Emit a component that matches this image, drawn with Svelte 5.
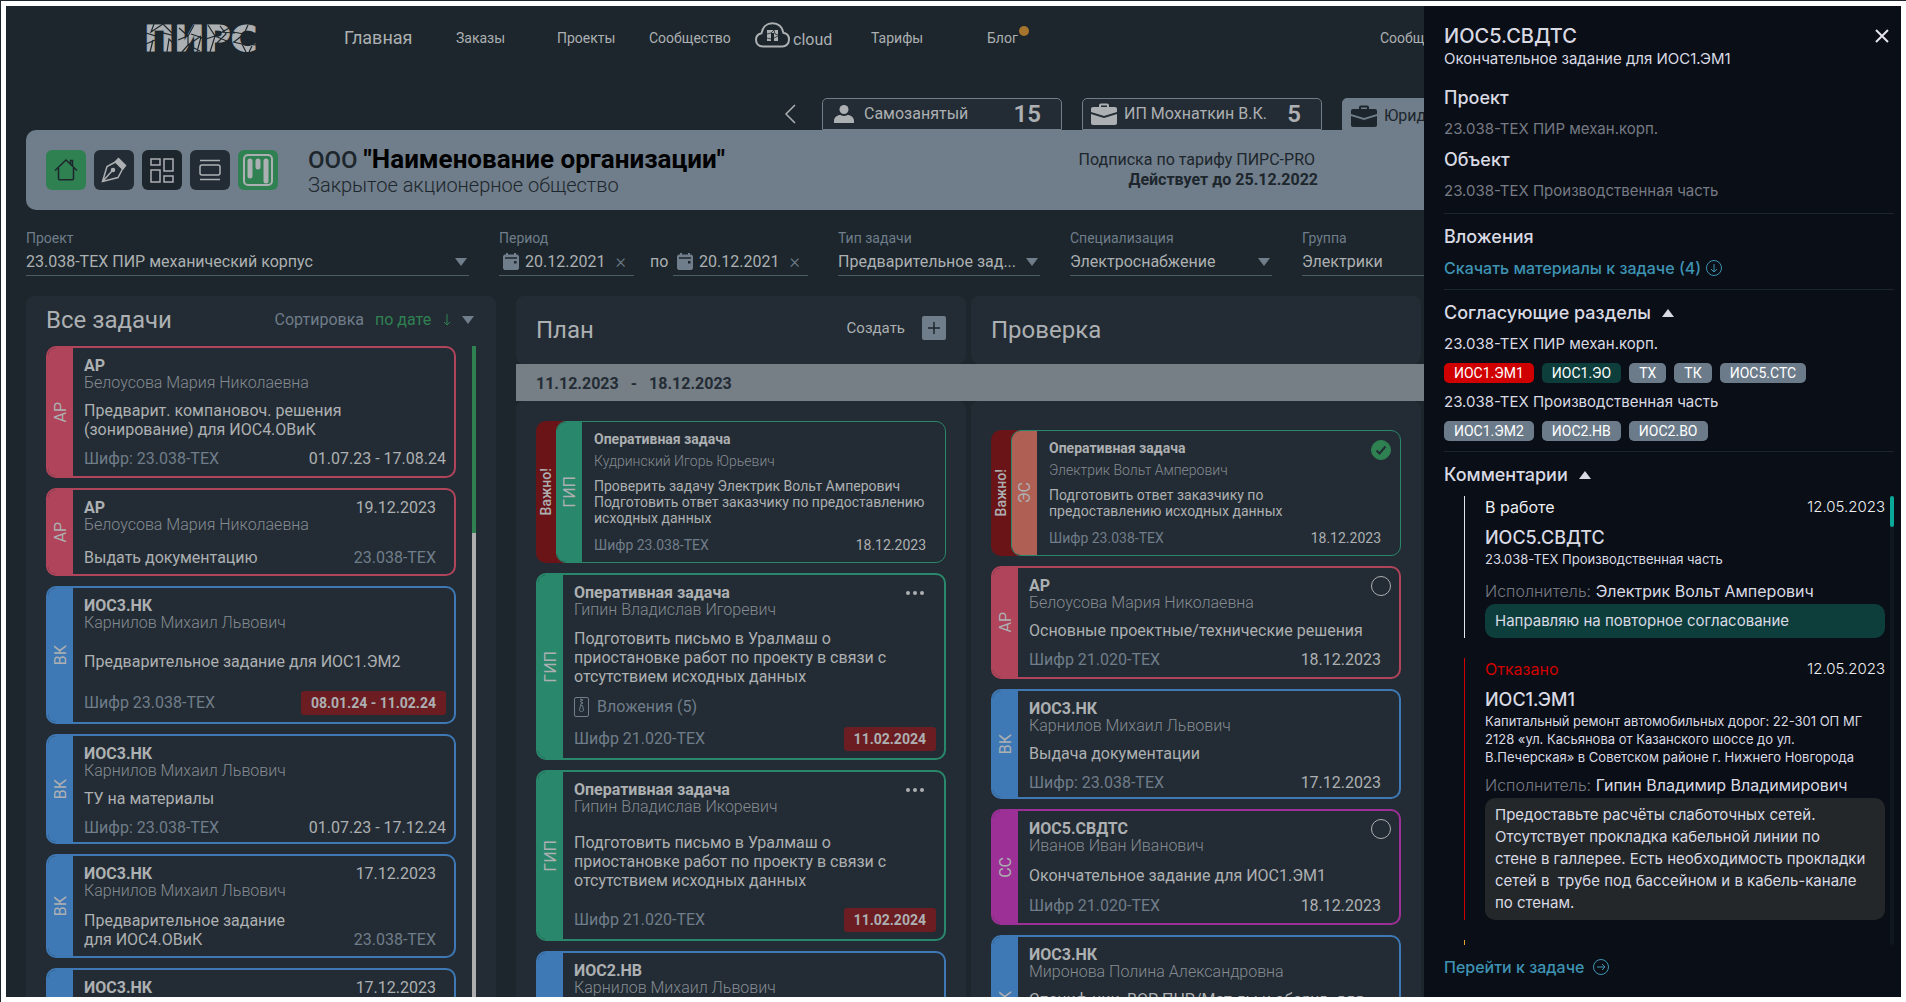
<script lang="ts">
  type Tone = 'pink' | 'blue' | 'green' | 'magenta' | 'salmon';

  interface Card {
    id: string;
    tone: Tone;
    mark: string;          // short section code on the coloured spine
    title: string;
    person: string;
    text: string;
    code?: string;
    date?: string;
    headDate?: string;     // date shown in the title row
    late?: string;         // overdue date, red badge
    files?: number;
    urgent?: boolean;
    menu?: boolean;
    check?: boolean;       // undefined means no tick circle
    height: number;
  }

  const nav = ['Заказы', 'Проекты', 'Сообщество'];

  const allTasks: Card[] = [
    { id: 'a1', tone: 'pink', mark: 'АР', title: 'АР', person: 'Белоусова Мария Николаевна', text: 'Предварит. компановоч. решения\n(зонирование) для ИОС4.ОВиК', code: 'Шифр: 23.038-ТЕХ', date: '01.07.23 - 17.08.24', height: 132 },
    { id: 'a2', tone: 'pink', mark: 'АР', title: 'АР', person: 'Белоусова Мария Николаевна', text: 'Выдать документацию', code: '23.038-ТЕХ', headDate: '19.12.2023', height: 88 },
    { id: 'a3', tone: 'blue', mark: 'ВК', title: 'ИОС3.НК', person: 'Карнилов Михаил Львович', text: 'Предварительное задание для ИОС1.ЭМ2', code: 'Шифр 23.038-ТЕХ', late: '08.01.24 - 11.02.24', height: 138 },
    { id: 'a4', tone: 'blue', mark: 'ВК', title: 'ИОС3.НК', person: 'Карнилов Михаил Львович', text: 'ТУ на материалы', code: 'Шифр: 23.038-ТЕХ', date: '01.07.23 - 17.12.24', height: 110 },
    { id: 'a5', tone: 'blue', mark: 'ВК', title: 'ИОС3.НК', person: 'Карнилов Михаил Львович', text: 'Предварительное задание\nдля ИОС4.ОВиК', code: '23.038-ТЕХ', headDate: '17.12.2023', height: 104 },
    { id: 'a6', tone: 'blue', mark: '', title: 'ИОС3.НК', person: '', text: '', headDate: '17.12.2023', height: 104 },
  ];

  const planTasks: Card[] = [
    { id: 'p1', tone: 'green', mark: 'ГИП', title: 'Оперативная задача', person: 'Кудринский Игорь Юрьевич', text: 'Проверить задачу Электрик Вольт Амперович\nПодготовить ответ заказчику по предоставлению\nисходных данных', code: 'Шифр 23.038-ТЕХ', date: '18.12.2023', urgent: true, height: 142 },
    { id: 'p2', tone: 'green', mark: 'ГИП', title: 'Оперативная задача', person: 'Гипин Владислав Игоревич', text: 'Подготовить письмо в Уралмаш о\nприостановке работ по проекту в связи с\nотсутствием исходных данных', code: 'Шифр 21.020-ТЕХ', late: '11.02.2024', files: 5, menu: true, height: 187 },
    { id: 'p3', tone: 'green', mark: 'ГИП', title: 'Оперативная задача', person: 'Гипин Владислав Икоревич', text: 'Подготовить письмо в Уралмаш о\nприостановке работ по проекту в связи с\nотсутствием исходных данных', code: 'Шифр 21.020-ТЕХ', late: '11.02.2024', menu: true, height: 171 },
    { id: 'p4', tone: 'blue', mark: '', title: 'ИОС2.НВ', person: 'Карнилов Михаил Львович', text: '', height: 110 },
  ];

  const reviewTasks: Card[] = [
    { id: 'r1', tone: 'salmon', mark: 'ЭС', title: 'Оперативная задача', person: 'Электрик Вольт Амперович', text: 'Подготовить ответ заказчику по\nпредоставлению исходных данных', code: 'Шифр 23.038-ТЕХ', date: '18.12.2023', urgent: true, check: true, height: 126 },
    { id: 'r2', tone: 'pink', mark: 'АР', title: 'АР', person: 'Белоусова Мария Николаевна', text: 'Основные проектные/технические решения', code: 'Шифр 21.020-ТЕХ', date: '18.12.2023', check: false, height: 113 },
    { id: 'r3', tone: 'blue', mark: 'ВК', title: 'ИОС3.НК', person: 'Карнилов Михаил Львович', text: 'Выдача документации', code: 'Шифр: 23.038-ТЕХ', date: '17.12.2023', height: 110 },
    { id: 'r4', tone: 'magenta', mark: 'СС', title: 'ИОС5.СВДТС', person: 'Иванов Иван Иванович', text: 'Окончательное задание для ИОС1.ЭМ1', code: 'Шифр 21.020-ТЕХ', date: '18.12.2023', check: false, height: 116 },
    { id: 'r5', tone: 'blue', mark: 'ВК', title: 'ИОС3.НК', person: 'Миронова Полина Александровна', text: 'Специф-ции, ВОР ПНР/Мат-лы и оборуд. для', height: 132 },
  ];

  const sections = [
    { name: '23.038-ТЕХ ПИР механ.корп.', chips: [['ИОС1.ЭМ1', 'refused'], ['ИОС1.ЭО', 'agreed'], ['ТХ', ''], ['ТК', ''], ['ИОС5.СТС', '']] },
    { name: '23.038-ТЕХ Производственная часть', chips: [['ИОС1.ЭМ2', ''], ['ИОС2.НВ', ''], ['ИОС2.ВО', '']] },
  ];

  const comments = [
    { status: 'В работе', kind: 'work', date: '12.05.2023', title: 'ИОС5.СВДТС', object: '23.038-ТЕХ Производственная часть', author: 'Электрик Вольт Амперович', text: 'Направляю на повторное согласование' },
    { status: 'Отказано', kind: 'refused', date: '12.05.2023', title: 'ИОС1.ЭМ1', object: 'Капитальный ремонт автомобильных дорог: 22-301 ОП МГ\n2128 «ул. Касьянова от Казанского шоссе до ул.\nВ.Печерская» в Советском районе г. Нижнего Новгорода', author: 'Гипин Владимир Владимирович', text: 'Предоставьте расчёты слаботочных сетей.\nОтсутствует прокладка кабельной линии по\nстене в галлерее. Есть необходимость прокладки\nсетей в  трубе под бассейном и в кабель-канале\nпо стенам.' },
  ];

  let showSections = $state(true);
  let showComments = $state(true);
  let open = $state(true);
</script>

{#snippet briefcase()}
  <svg class="case" viewBox="0 0 26 22" width="26" height="22" aria-hidden="true">
    <path d="M8 4V2.5C8 1.2 8.8.5 10 .5h6c1.200 0 2 .7 2 2V4h6c1.200 0 2 .7 2 2v3l-13 4L0 9V6c0-1.300.8-2 2-2zm2 0h6V2.500h-6z" fill="currentColor" />
    <path d="M0 11l13 4 13-4v9c0 1.200-.8 2-2 2H2c-1.200 0-2-.8-2-2z" fill="currentColor" />
  </svg>
{/snippet}

{#snippet calendar()}
  <svg viewBox="0 0 16 17" width="16" height="17" aria-hidden="true">
    <path d="M3 0h2v1.500h6V0h2v1.500h1.500L16 3v12.500L14.500 17h-13L0 15.500V3l1.500-1.500H3z" fill="#707d8a" />
    <path d="M2 5h12" stroke="#1c262c" stroke-width="1.500" />
    <path d="M11 8h2.500v2.500H11z" fill="#1c262c" />
  </svg>
{/snippet}

{#snippet card(c: Card)}
  <article class="card {c.tone}" class:urgent={c.urgent} class:low={c.height === 110} style:min-height="{c.height}px">
    {#if c.urgent}<span class="flag"><b>Важно!</b></span>{/if}
    <div class="card-main">
      <span class="spine"><i>{c.mark}</i></span>
      <div class="card-body">
        <header>
          <h3>{c.title}</h3>
          {#if c.headDate}<time>{c.headDate}</time>{/if}
          {#if c.menu}
            <button type="button" class="dots" aria-label="Действия"><svg viewBox="0 0 18 4" width="18" height="4"><circle cx="2" cy="2" r="2" /><circle cx="9" cy="2" r="2" /><circle cx="16" cy="2" r="2" /></svg></button>
          {/if}
        </header>
        {#if c.check !== undefined}
          <label class="tick">
            <input type="checkbox" checked={c.check} aria-label="Проверено" />
            <svg viewBox="0 0 20 20" width="20" height="20" aria-hidden="true"><path d="M5.500 10.500l3 3 6-7" /></svg>
          </label>
        {/if}
        <p class="person">{c.person}</p>
        {#if c.headDate}
          <div class="row last">
            <p class="text">{c.text}</p>
            <span class="code">{c.code}</span>
          </div>
        {:else}
          <p class="text grow" class:from-top={!c.code}>{c.text}</p>
          {#if c.files}
            <p class="files">
              <svg viewBox="0 0 15 20" width="15" height="20" aria-hidden="true"><rect x=".5" y=".5" width="14" height="19" rx="1.500" /><path d="M6 2l3 1-3 1.500 3 1.500-3 1.500M6.500 8.500h2l1 4.500c0 2-4 2-4 0z" /></svg>
              Вложения ({c.files})
            </p>
          {/if}
          {#if c.code}
            <div class="row foot">
              <span class="code">{c.code}</span>
              {#if c.late}<time class="late">{c.late}</time>{:else}<time class:range={(c.date ?? '').length > 10}>{c.date}</time>{/if}
            </div>
          {/if}
        {/if}
      </div>
    </div>
  </article>
{/snippet}

<div class="frame">
  <div class="app">
    <div class="workspace">
      <div class="page" class:wide={open}>
        <header class="top">
          <a href="#home" class="logo" aria-label="ПИРС">
            <svg viewBox="0 0 113 28" width="113" height="28">
              <text x="-2" y="27">ПИРС</text>
              <path class="crack" d="M0 9l10 3 7-3 12 3M8 0l-3 8 12-8 9 9M4 28l3-12M0 20l9-4M21 28l2-13 6 6M33 4l9 8 6-11M32 16l10-4v9l13-9M36 28l6-7 12 6M45 10l12 4M51 28l4-15M62 1l7 11 16-9M60 15l9-3M64 28l5-16 14 6M72 8l17 1M74 2l6 8-9 9M102 1l-4 9 16-1M87 8l11 2-10 8M87 18l9 2 4 8M97 20l16 1M106 22l-3 6" />
            </svg>
          </a>
          <nav>
            <a href="#main" class="current">Главная</a>
            {#each nav as item}<a href="#{item}">{item}</a>{/each}
            <a href="#cloud" class="cloud">
              <svg viewBox="0 0 35 26" width="35" height="26" aria-hidden="true">
                <path d="M8 24.500C3.500 24.500 1 21.500 1 17.800c0-3.300 2.200-5.800 5.500-6.500C7.500 5 11.800 1.200 17.500 1.200S27.600 5 28.400 10.800c3.300.6 5.600 3.200 5.600 6.700 0 3.900-2.700 7-6.800 7z" fill="none" stroke="#adb0b2" stroke-width="2" />
                <path d="M12 8h11v11h-4v-8h-3v8h-4z" fill="#adb0b2" />
                <path d="M12 12l4-1 3-3 1 4 3 1M12 16l4 1M19 16l4-2" stroke="#1c262c" stroke-width=".8" fill="none" />
              </svg>
              cloud
            </a>
            <a href="#tariffs">Тарифы</a>
            <a href="#blog" class="blog">Блог<i class="dot"></i></a>
            <a href="#messages">Сообщения</a>
          </nav>
        </header>

        <div class="accounts">
          <button type="button" class="prev" aria-label="Назад"><svg viewBox="0 0 12 20" width="12" height="20"><path d="M11 1L2 10l9 9" /></svg></button>
          <button type="button" class="account">
            <svg viewBox="0 0 20 18" width="20" height="18" aria-hidden="true"><circle cx="10" cy="4.500" r="4.500" fill="currentColor" /><path d="M0 18v-2c0-3.500 3-6 6.500-6 2 1.300 5 1.300 7 0 3.500 0 6.500 2.500 6.500 6v2z" fill="currentColor" /></svg>
            <span>Самозанятый</span><b>15</b>
          </button>
          <button type="button" class="account case-tab">{@render briefcase()}<span>ИП Мохнаткин В.К.</span><b>5</b></button>
          <button type="button" class="account case-tab active">{@render briefcase()}<span>Юридическое лицо</span></button>
        </div>

        <section class="banner">
          <div class="tools">
            <button type="button" class="on" aria-label="Главная"><svg viewBox="0 0 24 24" width="24" height="24"><path d="M1 12.500L12 2l11 10.500M4.500 10v10.500c0 .8.4 1.200 1.200 1.200h12.600c.8 0 1.200-.4 1.200-1.200V10M16.500 6V2.500h2v5.500" stroke="#1c262c" /></svg></button>
            <button type="button" aria-label="Задание"><svg viewBox="0 0 26 26" width="26" height="26"><path d="M1.500 24.500L6 9.500 14.500 5l7 7-4.500 8.500zM2 24l9-10" /><circle cx="12" cy="13" r="1.500" fill="#adb0b2" /><path d="M17.500.5l8 8-3.500 4.500-8.500-8.500z" fill="#adb0b2" stroke="none" /></svg></button>
            <button type="button" class="deep" aria-label="Плитка"><svg viewBox="0 0 24 25" width="24" height="25"><path d="M1 1h9v6H1zM14 1h9v12h-9zM1 12h9v12H1zM14 18h9v6h-9z" /></svg></button>
            <button type="button" aria-label="Лента"><svg viewBox="0 0 22 22" width="22" height="22"><path d="M1 1.500h20M1 20.500h20" /><rect x="1" y="6" width="20" height="10" rx="2" /></svg></button>
            <button type="button" class="on" aria-label="Доска"><svg viewBox="0 0 32 34" width="32" height="34"><rect x="2" y="2" width="28" height="30" rx="4" stroke-width="2" /><path d="M8 8v15M16 8v6M24 8v20" stroke-width="5" stroke-linecap="round" class="bars" /></svg></button>
          </div>
          <div class="org">
            <h1>ООО <b>"Наименование организации"</b></h1>
            <p>Закрытое акционерное общество</p>
          </div>
          <div class="plan">
            <p>Подписка по тарифу ПИРС-PRO</p>
            <b>Действует до 25.12.2022</b>
          </div>
        </section>

        <form class="filters">
          <label>Проект <span class="pick"><select><option>23.038-ТЕХ ПИР механический корпус</option></select></span></label>
          <fieldset>
            <legend>Период</legend>
            <div class="period">
              <span class="date">{@render calendar()}<input type="text" value="20.12.2021" aria-label="Начало периода" /><button type="button" aria-label="Очистить">×</button></span>
              <span class="to">по</span>
              <span class="date">{@render calendar()}<input type="text" value="20.12.2021" aria-label="Конец периода" /><button type="button" aria-label="Очистить">×</button></span>
            </div>
          </fieldset>
          <label>Тип задачи <span class="pick"><select><option>Предварительное зад...</option></select></span></label>
          <label>Специализация <span class="pick"><select><option>Электроснабжение</option></select></span></label>
          <label>Группа <span class="pick"><select><option>Электрики</option></select></span></label>
        </form>

        <main class="board">
          <section class="backlog">
            <header>
              <h2>Все задачи</h2>
              <label class="sort">Сортировка <select><option>по дате</option></select>
                <svg viewBox="0 0 8 12" width="8" height="12" aria-hidden="true"><path d="M4 0v11M1 8l3 3 3-3" fill="none" stroke="#2f8152" /></svg>
                <i class="tri"></i>
              </label>
            </header>
            <div class="backlog-body">
              <div class="stack">{#each allTasks as c (c.id)}{@render card(c)}{/each}</div>
              <div class="track"><i></i></div>
            </div>
          </section>

          <div class="stages">
            <header class="stage-head">
              <h2>План</h2>
              <button type="button" class="create">Создать <svg viewBox="0 0 24 24" width="24" height="24"><rect width="24" height="24" rx="2" fill="#707d8a" /><path d="M6 12h12M12 6v12" stroke="#1c262c" stroke-width="1.500" /></svg></button>
            </header>
            <header class="stage-head"><h2>Проверка</h2></header>
            <div class="stage-head"></div>
            <div class="week"><span>11.12.2023</span><span>-</span><span>18.12.2023</span></div>
            <div class="stack stage">{#each planTasks as c (c.id)}{@render card(c)}{/each}</div>
            <div class="stack stage review">{#each reviewTasks as c (c.id)}{@render card(c)}{/each}</div>
            <div class="stage"></div>
          </div>
        </main>
      </div>
    </div>

    {#if open}
      <aside class="drawer">
        <header>
          <h2>ИОС5.СВДТС</h2>
          <button type="button" class="close" aria-label="Закрыть" onclick={() => (open = false)}><svg viewBox="0 0 14 14" width="14" height="14"><path d="M1 1l12 12M13 1L1 13" /></svg></button>
        </header>
        <p>Окончательное задание для ИОС1.ЭМ1</p>
        <div class="block about">
          <h3>Проект</h3>
          <p class="dim">23.038-ТЕХ ПИР механ.корп.</p>
          <h3>Объект</h3>
          <p class="dim">23.038-ТЕХ Производственная часть</p>
        </div>
        <div class="block">
          <h3>Вложения</h3>
          <a class="link" href="#files">Скачать материалы к задаче (4)
            <svg viewBox="0 0 16 16" width="16" height="16" aria-hidden="true"><circle cx="8" cy="8" r="7.500" /><path d="M8 4v8M5 9l3 3 3-3" /></svg>
          </a>
        </div>
        <div class="block agreeing">
          <h3><button type="button" onclick={() => (showSections = !showSections)} aria-expanded={showSections}>Согласующие разделы <i class="tri up"></i></button></h3>
          {#if showSections}
            {#each sections as s}
              <p>{s.name}</p>
              <ul class="chips">{#each s.chips as [name, kind]}<li class={kind}>{name}</li>{/each}</ul>
            {/each}
          {/if}
        </div>
        <div class="block talk">
          <h3><button type="button" onclick={() => (showComments = !showComments)} aria-expanded={showComments}>Комментарии <i class="tri up"></i></button></h3>
          {#if showComments}
            <div class="feed">
              <div class="feed-list">
                {#each comments as m}
                  <article class="comment {m.kind}">
                    <div class="meta"><span class="status">{m.status}</span><time>{m.date}</time></div>
                    <h4>{m.title}</h4>
                    <p class="object">{m.object}</p>
                    <p class="author"><span>Исполнитель:</span> {m.author}</p>
                    <p class="bubble">{m.text}</p>
                  </article>
                {/each}
                <article class="comment waiting"></article>
              </div>
              <div class="feed-track"><i></i></div>
            </div>
          {/if}
        </div>
        <a class="link goto" href="#task">Перейти к задаче
          <svg viewBox="0 0 16 16" width="16" height="16" aria-hidden="true"><circle cx="8" cy="8" r="7.500" /><path d="M4 8h8M9 5l3 3-3 3" /></svg>
        </a>
      </aside>
    {/if}
  </div>
</div>

<style>
  :global(body) {
    background: #fff;
  }

  .frame {
    box-sizing: border-box;
    height: 100vh;
    padding: 5px;
    border-top: 1px solid #1c262c;
    border-left: 1px solid #1c262c;
    --text: #adb0b2;
    --slate: #707d8a;
    --page: #1c262c;
    --panel: #232c34;
    --green: #2f8152;
    --drawer: 477px;
  }

  .frame * {
    box-sizing: border-box;
  }

  .app {
    display: flex;
    height: 100%;
    overflow: hidden;
    background: var(--page);
    color: var(--text);
    font: 400 16px/20px Roboto, sans-serif;
  }

  .workspace {
    flex: 1;
    min-width: 0;
    overflow: hidden;
  }

  .page {
    display: flex;
    flex-direction: column;
    height: 100%;
  }

  /* the page keeps its full width, the drawer takes its right part */
  .wide {
    width: calc(100% + var(--drawer));
  }

  h1, h2, h3, h4, p, ul, fieldset {
    margin: 0;
    padding: 0;
    border: 0;
    font-weight: 400;
  }

  a {
    color: inherit;
    text-decoration: none;
  }

  button, input, select {
    margin: 0;
    padding: 0;
    border: 0;
    background: none;
    color: inherit;
    font: inherit;
    cursor: pointer;
  }

  select {
    appearance: none;
  }

  i {
    font-style: normal;
  }

  svg {
    display: block;
    flex: none;
  }

  .tri {
    border: 6px solid transparent;
    border-top: 8px solid var(--slate);
    border-bottom: 0;
  }

  .tri.up {
    border-top: 0;
    border-bottom: 8px solid #d9dae4;
  }

  /* top bar */
  .top {
    display: flex;
    flex: none;
    align-items: center;
    height: 64px;
    padding-left: 140px;
  }

  .logo {
    width: 198px;
  }

  .logo svg {
    overflow: visible;
  }

  .logo text {
    fill: var(--text);
    stroke: var(--text);
    font: 700 36px "DejaVu Sans", sans-serif;
  }

  .crack {
    fill: none;
    stroke: var(--page);
    stroke-width: 1.2;
  }

  nav {
    display: grid;
    grid-template-columns: 112px 101px 92px 106px 116px 116px 393px auto;
    align-items: center;
    font-size: 14px;
  }

  .current {
    font-size: 18px;
  }

  .cloud {
    display: flex;
    gap: 3px;
    align-items: flex-end;
    padding-bottom: 7px;
    font-size: 16px;
    line-height: 16px;
  }

  .blog {
    display: flex;
    gap: 1px;
  }

  .dot {
    width: 10px;
    height: 10px;
    margin-top: -2px;
    border-radius: 50%;
    background: #a5752e;
  }

  .accounts {
    display: flex;
    flex: none;
    gap: 20px;
    height: 32px;
    margin-top: 28px;
    padding-left: 778px;
  }

  .prev {
    width: 18px;
  }

  .prev path {
    fill: none;
    stroke: var(--text);
    stroke-width: 1.5;
  }

  .account {
    display: flex;
    gap: 10px;
    align-items: center;
    width: 240px;
    padding: 0 20px 0 11px;
    border: 1px solid var(--slate);
    border-radius: 5px 5px 0 0;
    background: var(--panel);
    text-align: left;
  }

  .account b {
    margin-left: auto;
    font-size: 24px;
    font-weight: 600;
  }

  .case-tab {
    gap: 7px;
    padding-left: 8px;
  }

  .active {
    padding-top: 4px;
    background: var(--slate);
    color: var(--page);
  }

  .banner {
    display: flex;
    flex: none;
    align-items: center;
    height: 80px;
    margin-left: 20px;
    padding-left: 20px;
    border-radius: 10px 0 0 10px;
    background: var(--slate);
    color: var(--page);
  }

  .tools {
    display: flex;
    gap: 8px;
  }

  .tools button {
    display: grid;
    place-items: center;
    width: 40px;
    height: 40px;
    border-radius: 6px;
    background: var(--panel);
  }

  .tools .on {
    background: var(--green);
  }

  .tools .deep {
    background: var(--page);
  }

  .tools svg {
    fill: none;
    stroke: var(--text);
    stroke-width: 1.5;
  }

  .org {
    margin-left: 30px;
  }

  .org h1 {
    font-size: 24px;
    font-weight: 500;
    line-height: 28px;
  }

  .org b {
    color: #000;
    font-size: 26px;
    font-weight: 700;
  }

  .org p {
    font-size: 20px;
    font-weight: 300;
    line-height: 22px;
  }

  .plan {
    margin-right: 583px;
    margin-left: auto;
    text-align: right;
  }

  .plan p {
    padding-right: 3px;
  }

  /* filters */
  .filters {
    display: grid;
    flex: none;
    grid-template-columns: 443fr 309fr 202fr 202fr 202fr 367fr;
    gap: 30px;
    margin: 18px 0 20px 20px;
  }

  .filters label, .filters legend {
    padding: 0;
    color: var(--slate);
    font-size: 14px;
    line-height: 20px;
  }

  .filters fieldset {
    min-width: 0;
  }

  .pick, .date {
    display: flex;
    align-items: center;
    min-width: 0;
    height: 28px;
    border-bottom: 1px solid #4b5c66;
    color: var(--text);
    font-size: 16px;
  }

  .pick {
    padding-right: 2px;
  }

  .pick::after {
    border: 6px solid transparent;
    border-top: 8px solid var(--slate);
    border-bottom: 0;
    content: '';
  }

  .pick select {
    flex: 1;
    min-width: 0;
  }

  .period {
    display: grid;
    grid-template-columns: minmax(0, 135fr) 39px minmax(0, 135fr);
  }

  .date {
    gap: 6px;
    padding: 0 8px 0 4px;
  }

  .date input {
    flex: 1;
    min-width: 0;
  }

  .date button {
    padding-bottom: 2px;
    color: var(--slate);
    font-size: 20px;
    font-weight: 300;
  }

  .to {
    padding-left: 16px;
    line-height: 28px;
  }

  /* board */
  .board {
    display: grid;
    flex: 1;
    grid-template-rows: minmax(0, 1fr);
    grid-template-columns: 470fr 1385fr;
    gap: 20px;
    min-height: 0;
    margin-left: 20px;
    overflow: hidden;
  }

  .board h2 {
    font-size: 24px;
    line-height: 28px;
  }

  .backlog {
    display: flex;
    flex-direction: column;
    min-height: 0;
    padding: 0 20px;
    border-radius: 8px 8px 0 0;
    background: var(--panel);
  }

  .backlog > header {
    display: flex;
    flex: none;
    align-items: center;
    justify-content: space-between;
    height: 50px;
    padding-bottom: 2px;
  }

  .sort {
    display: flex;
    gap: 11px;
    align-items: center;
    color: var(--slate);
  }

  .sort select {
    color: var(--green);
  }

  .sort .tri {
    margin-right: 2px;
  }

  .backlog-body {
    display: flex;
    flex: 1;
    gap: 16px;
    min-height: 0;
  }

  .backlog-body .stack {
    flex: 1;
    overflow: hidden;
  }

  .track {
    width: 4px;
    background: #adadae;
  }

  .track i {
    display: block;
    height: 187px;
    background: var(--green);
  }

  .stack {
    display: flex;
    flex-direction: column;
    gap: 10px;
  }

  .stages {
    display: grid;
    grid-template-rows: 68px 37px minmax(0, 1fr);
    grid-template-columns: 450fr 450fr 475fr;
    column-gap: 5px;
    min-height: 0;
  }

  .stage-head {
    display: flex;
    align-items: center;
    justify-content: space-between;
    padding: 0 20px;
    border-radius: 8px;
    background: var(--panel);
  }

  .create {
    display: flex;
    gap: 17px;
    align-items: center;
    padding-bottom: 4px;
    font-size: 15px;
  }

  .week {
    display: flex;
    grid-column: 1 / -1;
    gap: 12px;
    align-items: center;
    padding: 2px 0 0 20px;
    background: #767e86;
    color: var(--panel);
    font-weight: 700;
  }

  .stage {
    min-height: 0;
    padding: 20px 20px 0;
    border-radius: 8px 8px 0 0;
    background: var(--panel);
  }

  .review {
    padding-top: 29px;
  }

  /* cards */
  .card {
    --tone: #b0445a;
    display: flex;
    flex: none;
    border-radius: 10px;
  }

  .blue { --tone: #3e78b5; }
  .green { --tone: #29876b; }
  .magenta { --tone: #9c3097; }
  .salmon { --tone: #b05f55; }

  .flag {
    display: grid;
    place-items: center;
    width: 20px;
  }

  .flag b {
    font-size: 14px;
    font-weight: 500;
    writing-mode: vertical-rl;
    transform: rotate(180deg);
  }

  .card-main {
    display: flex;
    flex: 1;
    min-width: 0;
    overflow: hidden;
    border: 2px solid var(--tone);
    border-radius: 10px;
    background: var(--panel);
  }

  .urgent {
    background: linear-gradient(90deg, #6b1417 40px, transparent 40px);
  }

  .urgent .card-main {
    border: 1px solid #29876b;
  }

  .spine {
    display: grid;
    flex: none;
    place-items: center;
    width: 25px;
    background: var(--tone);
  }

  .spine i {
    line-height: 20px;
    writing-mode: vertical-rl;
    transform: rotate(180deg);
  }

  .card-body {
    position: relative;
    display: flex;
    flex: 1;
    flex-direction: column;
    min-width: 0;
    padding: 9px 8px 7px 11px;
  }

  .low .card-body {
    padding-bottom: 4px;
  }

  .card-body header {
    display: flex;
    align-items: center;
    justify-content: space-between;
    height: 18px;
    padding-right: 10px;
  }

  .card h3 {
    font-size: 16px;
    font-weight: 700;
  }

  .person {
    min-height: 16px;
    color: #858b92;
    font-weight: 300;
    line-height: 16px;
  }

  .text {
    line-height: 19px;
    white-space: pre-line;
  }

  .grow {
    display: grid;
    flex: 1;
    align-content: center;
  }

  .from-top {
    align-content: start;
    padding-top: 10px;
  }

  .row {
    display: flex;
    align-items: center;
    justify-content: space-between;
    min-height: 20px;
    padding-right: 10px;
  }

  .last {
    align-items: flex-end;
    margin-top: auto;
    min-height: 19px;
  }

  .last .code {
    line-height: 19px;
  }

  .code {
    color: var(--slate);
  }

  .range, .late {
    margin-right: -10px;
  }

  .late {
    padding: 0 10px;
    border-radius: 3px;
    background: #6b1d22;
    font-size: 14px;
    font-weight: 700;
    line-height: 24px;
  }

  .dots {
    padding-right: 2px;
  }

  .dots svg {
    fill: var(--text);
  }

  .files {
    display: flex;
    gap: 8px;
    align-items: center;
    margin-bottom: 10px;
    color: var(--slate);
  }

  .files svg {
    fill: none;
    stroke: var(--slate);
  }

  .urgent .card-body {
    padding: 8px 9px 7px 12px;
    font-size: 14px;
  }

  .urgent h3 {
    font-size: 14px;
  }

  .urgent .person {
    margin-top: 5px;
  }

  .urgent .text {
    line-height: 16px;
  }

  .tick {
    position: absolute;
    top: 8px;
    right: 8px;
    display: grid;
  }

  .tick > * {
    grid-area: 1 / 1;
  }

  .tick input {
    width: 20px;
    height: 20px;
    border: 1px solid var(--text);
    border-radius: 50%;
    appearance: none;
  }

  .tick input:checked {
    border-color: var(--green);
    background: var(--green);
  }

  .tick path {
    fill: none;
    stroke: none;
    stroke-width: 2;
  }

  .tick input:checked + svg path {
    stroke: var(--panel);
  }

  .urgent .tick {
    top: 9px;
    right: 9px;
  }

  /* task drawer */
  .drawer {
    display: flex;
    flex: none;
    flex-direction: column;
    width: var(--drawer);
    padding: 17px 7px 19px 20px;
    background: #0a0e16;
    color: #d9dae4;
    font: 300 15px/20px Inter, sans-serif;
  }

  .drawer header {
    display: flex;
    align-items: center;
    justify-content: space-between;
    padding-right: 5px;
  }

  .drawer h2 {
    font-size: 20px;
    font-weight: 500;
    line-height: 26px;
  }

  .close path {
    fill: none;
    stroke: #e4e5ec;
    stroke-width: 2;
  }

  .block {
    display: flex;
    flex-direction: column;
    gap: 9px;
    padding: 11px 0;
    border-bottom: 1px solid #1b252c;
  }

  .about {
    padding: 17px 0 12px;
  }

  .agreeing {
    padding-bottom: 10px;
  }

  .drawer h3 {
    font-size: 18px;
    font-weight: 500;
    line-height: 24px;
  }

  .drawer h3 button {
    display: flex;
    gap: 11px;
    align-items: center;
  }

  .dim {
    color: #767a84;
  }

  .link {
    display: flex;
    gap: 5px;
    align-items: center;
    color: #3e93b3;
    font-size: 16px;
    font-weight: 500;
  }

  .link svg {
    fill: none;
    stroke: #3e93b3;
  }

  .chips {
    display: flex;
    gap: 8px;
    list-style: none;
  }

  .chips li {
    padding: 0 10px;
    border-radius: 5px;
    background: #6b7b8a;
    color: #fff;
    font: 400 14px/20px Roboto, sans-serif;
  }

  .chips .refused {
    background: #d10000;
  }

  .chips .agreed {
    background: #0d3e3c;
  }

  .talk {
    flex: 1;
    min-height: 0;
    padding-bottom: 0;
    border: 0;
  }

  .feed {
    display: flex;
    flex: 1;
    gap: 5px;
    min-height: 0;
  }

  .feed-list {
    display: flex;
    flex: 1;
    flex-direction: column;
    gap: 20px;
    min-width: 0;
    padding-left: 20px;
    overflow: hidden;
  }

  .feed-track {
    width: 4px;
    border-radius: 2px;
    background: #10181d;
  }

  .feed-track i {
    display: block;
    height: 31px;
    border-radius: 2px;
    background: #0aa899;
  }

  .comment {
    flex: none;
    padding-left: 20px;
    border-left: 1px solid #e4e5ec;
  }

  .comment.refused {
    border-color: #d10000;
  }

  .comment.waiting {
    height: 40px;
    border-color: #e5a32e;
  }

  .meta {
    display: flex;
    justify-content: space-between;
    color: #eeeef2;
    line-height: 22px;
  }

  .status {
    font-size: 16px;
    font-weight: 400;
  }

  .refused .status {
    color: #d10000;
  }

  .comment h4 {
    margin-top: 8px;
    font-size: 18px;
    font-weight: 500;
    line-height: 24px;
  }

  .object {
    min-height: 22px;
    font-size: 13px;
    line-height: 18px;
    white-space: pre-line;
  }

  .author {
    margin-top: 8px;
    font-size: 16px;
    font-weight: 400;
    line-height: 22px;
  }

  .author span {
    color: #767a84;
    font-weight: 300;
  }

  .bubble {
    margin-top: 2px;
    padding: 6px 10px;
    border-radius: 10px;
    background: #0d3e3c;
    line-height: 22px;
    white-space: pre-wrap;
  }

  .refused .bubble {
    background: #23272a;
  }

  .goto {
    gap: 9px;
    margin-top: 11px;
    line-height: 22px;
  }
</style>
